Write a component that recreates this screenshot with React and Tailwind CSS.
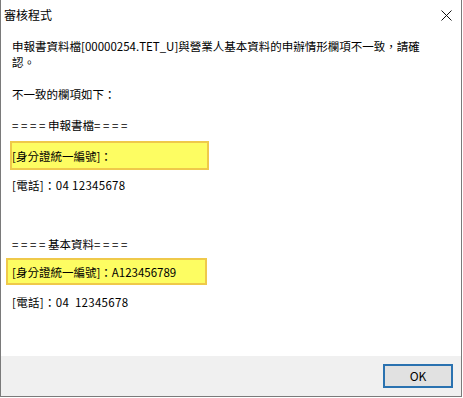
export default function App() {
  const font = { fontFamily: '"Noto Sans CJK TC", "Noto Sans", sans-serif' };
  return (
    <div className="w-[463px] h-[398px] bg-white overflow-hidden">
      <div
        className="w-[462px] h-[397px] flex flex-col bg-white border-l border-r border-b border-[#7a7a7a] text-black text-[12px] leading-[16px]"
        style={font}
      >
        {/* Title bar */}
        <div className="h-[30px] flex items-center justify-between pl-[3px] pr-[9px] shrink-0">
          <span>審核程式</span>
          <svg width="11" height="11" viewBox="0 0 11 11">
            <path d="M0.5 0.5 L10.5 10.5 M10.5 0.5 L0.5 10.5" stroke="#111" strokeWidth="1" fill="none" />
          </svg>
        </div>

        {/* Body */}
        <div className="flex-1 px-[11px] pt-[8px] text-[11.5px]">
          <div className="whitespace-nowrap">申報書資料檔[00000254.TET_U]與營業人基本資料的申辦情形欄項不一致，請確</div>
          <div>認。</div>
          <div className="mt-[16px]">不一致的欄項如下：</div>
          <div className="mt-[15px]">
            <span className="tracking-[2.6px]">====</span>申報書檔<span className="tracking-[2.6px]">====</span>
          </div>
          <div className="mt-[8px] -ml-[2px] w-[199px] h-[29px] flex items-center bg-[#fdfd62] border-2 border-[#efc94a]">
            <span>[身分證統一編號]：</span>
          </div>
          <div className="mt-[7px] tracking-[0.3px]">[電話]：04 12345678</div>
          <div className="mt-[43px]">
            <span className="tracking-[2.6px]">====</span>基本資料<span className="tracking-[2.6px]">====</span>
          </div>
          <div className="mt-[6px] -ml-[6px] w-[201px] h-[27px] flex items-center pl-[4px] bg-[#fdfd62] border-2 border-[#efc94a]">
            <span>[身分證統一編號]：A123456789</span>
          </div>
          <div className="mt-[9px] whitespace-pre tracking-[0.3px]">[電話]：04  12345678</div>
        </div>

        {/* Footer */}
        <div className="h-[40px] bg-[#f0f0f0] flex items-center justify-end pr-[8px] shrink-0">
          <button className="w-[70px] h-[24px] bg-[#e1e1e1] border-2 border-[#2a72b0] text-[12px] leading-[16px] flex items-center justify-center">
            OK
          </button>
        </div>
      </div>
    </div>
  );
}
